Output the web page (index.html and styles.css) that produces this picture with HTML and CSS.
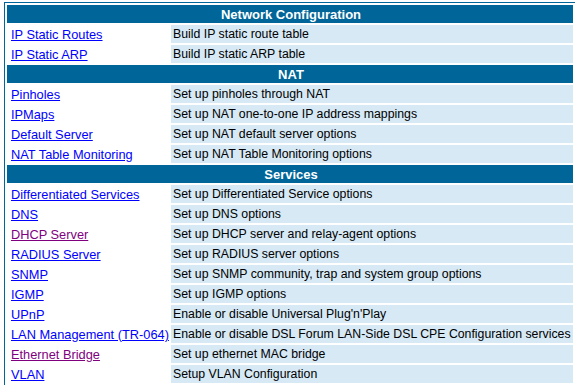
FILE: index.html
```html
<!DOCTYPE html>
<html lang="en">
<head>
    <meta charset="UTF-8">
    <title>Advanced Setup</title>
    <link rel="stylesheet" href="styles.css">
</head>
<body>
    <table class="menu">
        <tr><th colspan="2" class="section">Network Configuration</th></tr>
        <tr><td class="item"><a href="#">IP Static Routes</a></td><td class="desc">Build IP static route table</td></tr>
        <tr><td class="item"><a href="#">IP Static ARP</a></td><td class="desc">Build IP static ARP table</td></tr>

        <tr><th colspan="2" class="section">NAT</th></tr>
        <tr><td class="item"><a href="#">Pinholes</a></td><td class="desc">Set up pinholes through NAT</td></tr>
        <tr><td class="item"><a href="#">IPMaps</a></td><td class="desc">Set up NAT one-to-one IP address mappings</td></tr>
        <tr><td class="item"><a href="#">Default Server</a></td><td class="desc">Set up NAT default server options</td></tr>
        <tr><td class="item"><a href="#">NAT Table Monitoring</a></td><td class="desc">Set up NAT Table Monitoring options</td></tr>

        <tr><th colspan="2" class="section">Services</th></tr>
        <tr><td class="item"><a href="#">Differentiated Services</a></td><td class="desc">Set up Differentiated Service options</td></tr>
        <tr><td class="item"><a href="#">DNS</a></td><td class="desc">Set up DNS options</td></tr>
        <tr><td class="item"><a href="#" class="visited">DHCP Server</a></td><td class="desc">Set up DHCP server and relay-agent options</td></tr>
        <tr><td class="item"><a href="#">RADIUS Server</a></td><td class="desc">Set up RADIUS server options</td></tr>
        <tr><td class="item"><a href="#">SNMP</a></td><td class="desc">Set up SNMP community, trap and system group options</td></tr>
        <tr><td class="item"><a href="#">IGMP</a></td><td class="desc">Set up IGMP options</td></tr>
        <tr><td class="item"><a href="#">UPnP</a></td><td class="desc">Enable or disable Universal Plug'n'Play</td></tr>
        <tr><td class="item"><a href="#">LAN Management (TR-064)</a></td><td class="desc">Enable or disable DSL Forum LAN-Side DSL CPE Configuration services</td></tr>
        <tr><td class="item"><a href="#" class="visited">Ethernet Bridge</a></td><td class="desc">Set up ethernet MAC bridge</td></tr>
        <tr><td class="item"><a href="#">VLAN</a></td><td class="desc">Setup VLAN Configuration</td></tr>
    </table>
</body>
</html>
```

FILE: styles.css
```css
body {
    margin: 2px 2px 0 4px;
    background: #ffffff;
    font-family: 'Liberation Sans', Arial, sans-serif;
    font-size: 12px;
}

.menu {
    width: 572px;
    border: 1px solid #006699;
    border-spacing: 2px;
}

.menu td, .menu th {
    height: 18px;
    padding: 0 0 0 2px;
    white-space: nowrap;
}

.section {
    background-color: #006699;
    color: #ffffff;
    font-size: 13px;
    font-weight: bold;
    text-align: center;
}

.menu .item {
    width: 158px;
    padding-left: 4px;
}

.item a {
    color: #0000ff;
    font-size: 12.8px;
}

.item a.visited {
    color: #800080;
}

.desc {
    background-color: #d6e9f5;
    color: #000000;
    font-size: 12.3px;
}
```
